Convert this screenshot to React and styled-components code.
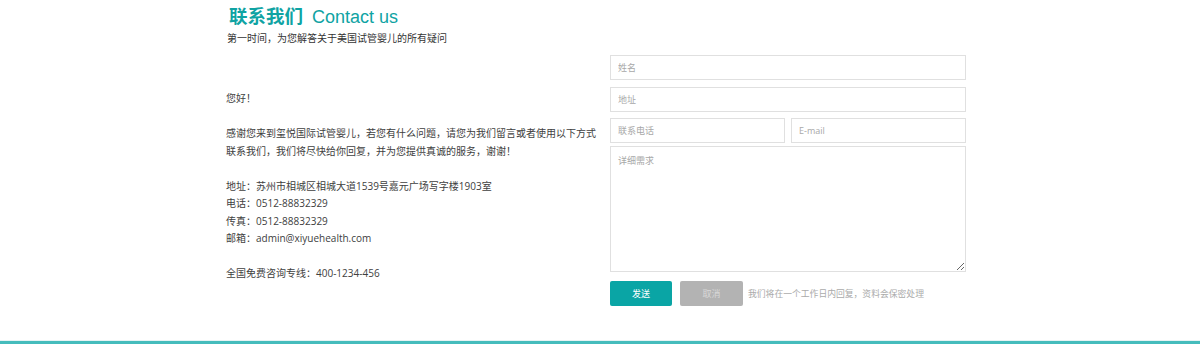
import React from "react";
import styled, { createGlobalStyle } from "styled-components";

const GlobalStyle = createGlobalStyle`
  html, body {
    margin: 0;
    padding: 0;
    background: #fff;
  }
  body {
    font-family: "Open Sans", "Noto Sans CJK SC", sans-serif;
    color: #333;
  }
`;

const teal = "#0fa3a3";

const Page = styled.div`
  min-height: 344px;
  display: flex;
  flex-direction: column;
  box-sizing: border-box;
`;

const Container = styled.div`
  width: 748px;
  margin: 0 auto;
`;

const Header = styled.div`
  padding-top: 4px;
`;

const Title = styled.h2`
  margin: 0 0 0 3px;
  font-size: 18.5px;
  line-height: 22px;
  color: ${teal};
  font-weight: 700;
  font-family: "Noto Sans CJK SC", sans-serif;
  span {
    font-family: "Liberation Sans", "Noto Sans CJK SC", sans-serif;
    font-weight: 400;
    margin-left: 9px;
    font-size: 18px;
  }
`;

const Subtitle = styled.p`
  margin: 2px 0 0 1px;
  font-size: 10px;
  line-height: 16px;
  color: #333;
`;

const Row = styled.div`
  display: flex;
  margin-top: 9px;
`;

const Info = styled.div`
  flex: 0 0 384px;
  padding-top: 35px;
  font-size: 10px;
  line-height: 17.5px;
  color: #404040;
  p {
    margin: 0 0 17.5px;
  }
`;

const Form = styled.form`
  flex: 0 0 356px;
  display: flex;
  flex-direction: column;
`;

const fieldCss = `
  box-sizing: border-box;
  border: 1px solid #e0e0e0;
  background: #fff;
  font-family: "Open Sans", "Noto Sans CJK SC", sans-serif;
  font-size: 9px;
  color: #333;
  outline: none;
  padding: 0 7px;
  &::placeholder {
    color: #a8a8a8;
  }
`;

const Input = styled.input`
  ${fieldCss}
  height: 25px;
  width: 100%;
  margin-bottom: ${({ $gap }) => $gap}px;
`;

const Pair = styled.div`
  display: flex;
  gap: 6px;
  margin-bottom: 3px;
`;

const Textarea = styled.textarea`
  ${fieldCss}
  height: 126px;
  width: 100%;
  padding: 7px;
  resize: vertical;
  display: block;
`;

const Actions = styled.div`
  display: flex;
  align-items: center;
  margin-top: 9px;
`;

const Button = styled.button`
  width: ${({ $w }) => $w}px;
  height: 25px;
  border: none;
  border-radius: 2px;
  background: ${({ $primary }) => ($primary ? "#0aa5a5" : "#b3b3b3")};
  color: ${({ $primary }) => ($primary ? "#fff" : "#d8d8d8")};
  font-size: 9px;
  font-family: "Noto Sans CJK SC", sans-serif;
  margin-right: ${({ $mr }) => $mr}px;
  padding: 0;
  cursor: pointer;
`;

const Note = styled.span`
  font-size: 8.8px;
  color: #aaa;
`;

const Footer = styled.div`
  margin-top: auto;
  border-top: 1px solid #e6f3f3;
  height: 3px;
  background: #45bcbc;
`;

export default function App() {
  return (
    <>
      <GlobalStyle />
      <Page>
        <Container>
          <Header>
            <Title>
              联系我们<span>Contact us</span>
            </Title>
            <Subtitle>第一时间，为您解答关于美国试管婴儿的所有疑问</Subtitle>
          </Header>
          <Row>
            <Info>
              <p>您好！</p>
              <p>
                感谢您来到玺悦国际试管婴儿，若您有什么问题，请您为我们留言或者使用以下方式
                <br />
                联系我们，我们将尽快给你回复，并为您提供真诚的服务，谢谢！
              </p>
              <p>
                地址：苏州市相城区相城大道1539号嘉元广场写字楼1903室
                <br />
                电话：0512-88832329
                <br />
                传真：0512-88832329
                <br />
                邮箱：admin@xiyuehealth.com
              </p>
              <p>全国免费咨询专线：400-1234-456</p>
            </Info>
            <Form onSubmit={(e) => e.preventDefault()}>
              <Input placeholder="姓名" $gap={7} />
              <Input placeholder="地址" $gap={6} />
              <Pair>
                <Input placeholder="联系电话" $gap={0} />
                <Input placeholder="E-mail" $gap={0} />
              </Pair>
              <Textarea placeholder="详细需求" />
              <Actions>
                <Button type="submit" $primary $w={62} $mr={8}>
                  发送
                </Button>
                <Button type="reset" $w={63} $mr={5}>
                  取消
                </Button>
                <Note>我们将在一个工作日内回复，资料会保密处理</Note>
              </Actions>
            </Form>
          </Row>
        </Container>
        <Footer />
      </Page>
    </>
  );
}
